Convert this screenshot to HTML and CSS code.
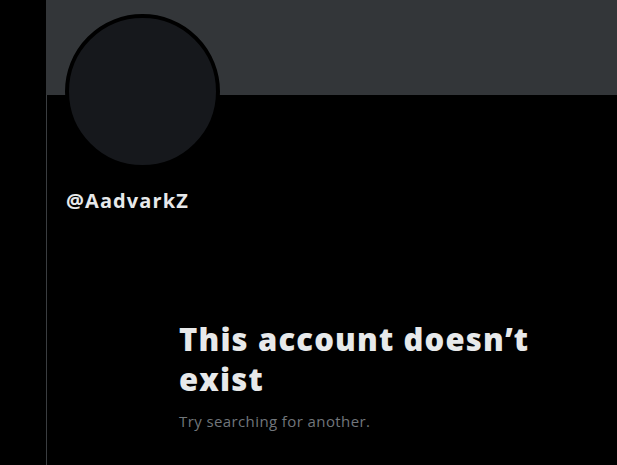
FILE: index.html
```html
<!DOCTYPE html>
<html>
<head>
<meta charset="utf-8">
<link rel="stylesheet" href="styles.css">
</head>
<body>
<div class="page">
  <div class="gutter"></div>
  <main class="column">
    <div class="banner"></div>
    <div class="profile">
      <div class="avatar"></div>
      <div class="handle">@AadvarkZ</div>
    </div>
    <section class="empty">
      <h1 class="empty-title">This account doesn’t exist</h1>
      <p class="empty-text">Try searching for another.</p>
    </section>
  </main>
</div>
</body>
</html>
```
FILE: styles.css
```css
html, body {
  margin: 0;
  padding: 0;
  background: #000;
  height: 100%;
  overflow: hidden;
}
body {
  font-family: "Open Sans", "Noto Sans", sans-serif;
  color: #e7e9ea;
}
.page {
  display: flex;
  height: 465px;
}
.gutter {
  width: 46px;
  flex: none;
}
.column {
  flex: 1;
  border-left: 1px solid #3a3d40;
  display: flex;
  flex-direction: column;
}
.banner {
  height: 95px;
  background: #333639;
  margin-left: -1px;
}
.profile {
  padding-left: 18px;
}
.avatar {
  width: 147px;
  height: 147px;
  border-radius: 50%;
  border: 4px solid #000;
  background: #16181c;
  margin-top: -81px;
}
.handle {
  margin-top: 20px;
  font-weight: 700;
  font-size: 20px;
  line-height: 24px;
  letter-spacing: 1.1px;
  padding-left: 1px;
}
.empty {
  margin: 106px 0 0 132px;
  width: 390px;
}
.empty-title {
  margin: 0;
  font-size: 31px;
  line-height: 40px;
  font-weight: 800;
  letter-spacing: 1.15px;
}
.empty-text {
  margin: 12px 0 0;
  font-size: 15px;
  line-height: 20px;
  letter-spacing: 0.4px;
  color: #71767b;
}
```
